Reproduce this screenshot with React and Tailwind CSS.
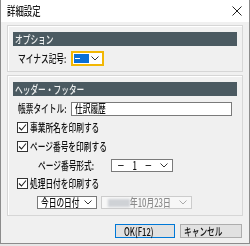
import React from 'react';

const T = ({ children, className = '' }) => (
  <span className={'inline-block origin-left scale-x-[0.7] whitespace-nowrap leading-none font-medium ' + className}>{children}</span>
);

const Chevron = ({ color = '#333' }) => (
  <svg width="8" height="5" viewBox="0 0 8 5" className="shrink-0">
    <path d="M0.5 0.5 L4 4 L7.5 0.5" fill="none" stroke={color} strokeWidth="1" />
  </svg>
);

const Check = () => (
  <span className="w-[11px] h-[11px] border border-[#333] bg-white flex items-center justify-center shrink-0">
    <svg width="9" height="9" viewBox="0 0 9 9">
      <path d="M1 4.5 L3.5 7 L8 1.5" fill="none" stroke="#222" strokeWidth="1.1" />
    </svg>
  </span>
);

const CheckRow = ({ label, className = '' }) => (
  <div className={'flex items-center h-[15px] pl-[4px] gap-[2px] ' + className}>
    <Check />
    <T className="text-[11px] text-[#111]">{label}</T>
  </div>
);

const Header = ({ children }) => (
  <div className="h-[14px] bg-[#4b5a61] flex items-center pl-[2px]">
    <T className="text-[11px] text-[#eef0f0]">{children}</T>
  </div>
);

const Select = ({ children, className = '', disabled }) => (
  <div
    className={
      'h-[13px] border flex items-center pl-[3px] pr-[4px] ' +
      (disabled ? 'border-[#cccccc] bg-[#f7f7f7] ' : 'border-[#7a7a7a] bg-white ') +
      className
    }
  >
    <div className="flex-1 min-w-0 flex items-center">{children}</div>
    <Chevron color={disabled ? '#aaa' : '#333'} />
  </div>
);

export default function App() {
  return (
    <div className="w-[250px] h-[246px] bg-[#e6e6e6] font-['Noto_Sans_CJK_JP',sans-serif]">
      <div className="w-[250px] h-[244px] flex flex-col border-l border-r border-b border-[#8c8c8c] bg-[#f0f0f0]">
        <div className="h-[22px] bg-white flex items-center pl-[6px] pr-[6px]">
          <T className="text-[12px] text-[#222] scale-x-[0.7]">詳細設定</T>
          <svg width="10" height="10" viewBox="0 0 10 10" className="ml-auto mr-[1px]">
            <path d="M0.5 0.5 L9.5 9.5 M9.5 0.5 L0.5 9.5" stroke="#222" strokeWidth="1" />
          </svg>
        </div>

        <div className="px-[6px] pt-[3px]">
          <div className="border border-[#d6d6d6] shadow-[inset_1px_1px_0_#fff] pt-[6px] px-[5px] pb-[5px]">
            <Header>オプション</Header>
            <div className="flex items-center h-[15px] mt-[5px]">
              <div className="w-[58px] pl-[5px] flex items-center">
                <T className="text-[11px] text-[#111]">マイナス記号:</T>
              </div>
              <div className="w-[33px] h-[15px] border-2 border-[#f2b705] bg-white flex items-center pl-[1px] pr-[3px]">
                <div className="w-[15px] h-[9px] bg-[#0a6fd6] flex items-center pl-[1px]">
                  <div className="w-[5px] h-[1px] bg-white" />
                </div>
                <div className="ml-auto">
                  <Chevron />
                </div>
              </div>
            </div>
          </div>

          <div className="mt-[3px] border border-[#d6d6d6] shadow-[inset_1px_1px_0_#fff] pt-[6px] px-[5px] pb-[6px]">
            <Header>ヘッダー・フッター</Header>
            <div className="flex items-center h-[15px] mt-[5px]">
              <div className="w-[58px] pl-[5px] flex items-center">
                <T className="text-[11px] text-[#111]">帳票タイトル:</T>
              </div>
              <div className="w-[161px] h-[14px] border border-[#7a7a7a] bg-white flex items-center pl-[3px]">
                <T className="text-[11px] text-[#111]">仕訳履歴</T>
              </div>
            </div>
            <CheckRow label="事業所名を印刷する" className="mt-[4px]" />
            <CheckRow label="ページ番号を印刷する" className="mt-[4px]" />
            <div className="flex items-center h-[15px] mt-[4px]">
              <div className="w-[98px] pl-[25px] flex items-center">
                <T className="text-[11px] text-[#111]">ページ番号形式:</T>
              </div>
              <Select className="w-[62px]">
                <T className="text-[11px] text-[#111] ml-[2px]">－　1　－</T>
              </Select>
            </div>
            <CheckRow label="処理日付を印刷する" className="mt-[3px]" />
            <div className="flex items-center h-[13px] mt-[5px] pl-[24px] gap-[4px]">
              <Select className="w-[60px]">
                <T className="text-[11px] text-[#111]">今日の日付</T>
              </Select>
              <Select className="w-[91px]" disabled>
                <div className="w-[22px] h-[8px] bg-[#cfd2d6] blur-[1px] shrink-0 ml-[3px]" />
                <T className="text-[11px] text-[#8a8a8a]">年10月23日</T>
              </Select>
            </div>
          </div>
        </div>

        <div className="flex justify-end gap-[5px] mt-[8px] pr-[7px]">
          <button className="w-[60px] h-[14px] border border-[#0078d7] bg-[#e1e1e1] flex items-center justify-center">
            <T className="text-[11px] text-[#111] origin-center">OK(F12)</T>
          </button>
          <button className="w-[62px] h-[14px] border border-[#adadad] bg-[#e1e1e1] flex items-center justify-center">
            <T className="text-[11px] text-[#111] origin-center">キャンセル</T>
          </button>
        </div>
      </div>
    </div>
  );
}
